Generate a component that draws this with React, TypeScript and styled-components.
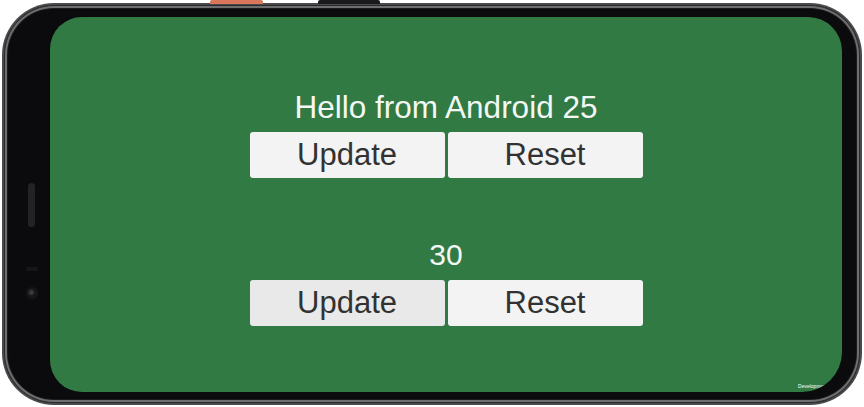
import React, { useState } from "react";
import styled, { createGlobalStyle } from "styled-components";

const GlobalStyle = createGlobalStyle`
  html, body {
    margin: 0;
    padding: 0;
    background: #ffffff;
  }
  body {
    font-family: "Liberation Sans", Arial, sans-serif;
  }
`;

const Stage = styled.div`
  width: 864px;
  height: 407px;
  padding: 3px 2px 2px 2px;
  box-sizing: border-box;
  position: relative;
`;

const SideButton = styled.div<{ $left: number; $width: number; $color: string }>`
  position: absolute;
  top: 0;
  left: ${(p) => p.$left}px;
  width: ${(p) => p.$width}px;
  height: 4px;
  border-radius: 2px 2px 0 0;
  background: ${(p) => p.$color};
`;

const Phone = styled.div`
  width: 100%;
  height: 100%;
  box-sizing: border-box;
  border-radius: 52px;
  background: #4a4a4c;
  padding: 2px;
`;

const Body = styled.div`
  width: 100%;
  height: 100%;
  box-sizing: border-box;
  border-radius: 50px;
  background: #0b0b0d;
  box-shadow: inset 0 0 0 1px #2a2a2c, inset 0 0 0 3px #6e6e70, inset 0 0 0 4px #1a1a1c;
  display: flex;
  padding: 12px 18px 11px 0;
`;

const Bezel = styled.div`
  width: 46px;
  flex: 0 0 46px;
  display: flex;
  flex-direction: column;
  align-items: center;
  padding-top: 166px;
  box-sizing: border-box;
`;

const Speaker = styled.div`
  width: 7px;
  height: 44px;
  border-radius: 4px;
  background: #232325;
  margin-left: 9px;
`;

const Sensor = styled.div`
  width: 12px;
  height: 4px;
  margin-top: 40px;
  margin-left: 9px;
  border-radius: 2px;
  background: #161618;
`;

const Camera = styled.div`
  width: 12px;
  height: 12px;
  margin-top: 16px;
  margin-left: 9px;
  border-radius: 50%;
  background: radial-gradient(circle at 45% 45%, #3a3a3e 0 15%, #141416 40%, #1c1c1e 100%);
`;

const Screen = styled.div`
  flex: 1;
  position: relative;
  overflow: hidden;
  background: #327a43;
  border-radius: 32px 34px 40px 32px;
  display: flex;
  flex-direction: column;
  align-items: center;
  padding-top: 73px;
  box-sizing: border-box;
`;

const Group = styled.div<{ $gapTop: number }>`
  display: flex;
  flex-direction: column;
  align-items: center;
  gap: 8px;
  margin-top: ${(p) => p.$gapTop}px;
`;

const Label = styled.div<{ $size: number }>`
  color: #f4f8f4;
  font-size: ${(p) => p.$size}px;
  line-height: 34px;
  height: 34px;
  white-space: nowrap;
`;

const Row = styled.div`
  display: flex;
  gap: 3px;
`;

const Button = styled.button<{ $pressed?: boolean }>`
  width: 195px;
  height: 46px;
  border: none;
  border-radius: 3px;
  background: ${(p) => (p.$pressed ? "#e9e9e9" : "#f3f3f3")};
  color: #323232;
  font-family: "Liberation Sans", Arial, sans-serif;
  font-size: 31px;
  padding: 0;
  cursor: pointer;
`;

const BuildTag = styled.div`
  position: absolute;
  right: 2px;
  bottom: 3px;
  color: #ffffff;
  font-size: 5px;
  white-space: nowrap;
`;

export default function App() {
  const [message, setMessage] = useState("Hello from Android 25");
  const [count, setCount] = useState(30);

  return (
    <>
      <GlobalStyle />
      <Stage>
        <SideButton $left={210} $width={53} $color="#d9775c" />
        <SideButton $left={318} $width={62} $color="#1a1a1c" />
        <Phone>
          <Body>
            <Bezel>
              <Speaker />
              <Sensor />
              <Camera />
            </Bezel>
            <Screen>
              <Group $gapTop={0}>
                <Label $size={31.5}>{message}</Label>
                <Row>
                  <Button onClick={() => setMessage("Hello from Android 25")}>Update</Button>
                  <Button onClick={() => setMessage("")}>Reset</Button>
                </Row>
              </Group>
              <Group $gapTop={60}>
                <Label $size={30}>{count}</Label>
                <Row>
                  <Button $pressed onClick={() => setCount((c) => c + 1)}>
                    Update
                  </Button>
                  <Button onClick={() => setCount(0)}>Reset</Button>
                </Row>
              </Group>
              <BuildTag>Development Build</BuildTag>
            </Screen>
          </Body>
        </Phone>
      </Stage>
    </>
  );
}
